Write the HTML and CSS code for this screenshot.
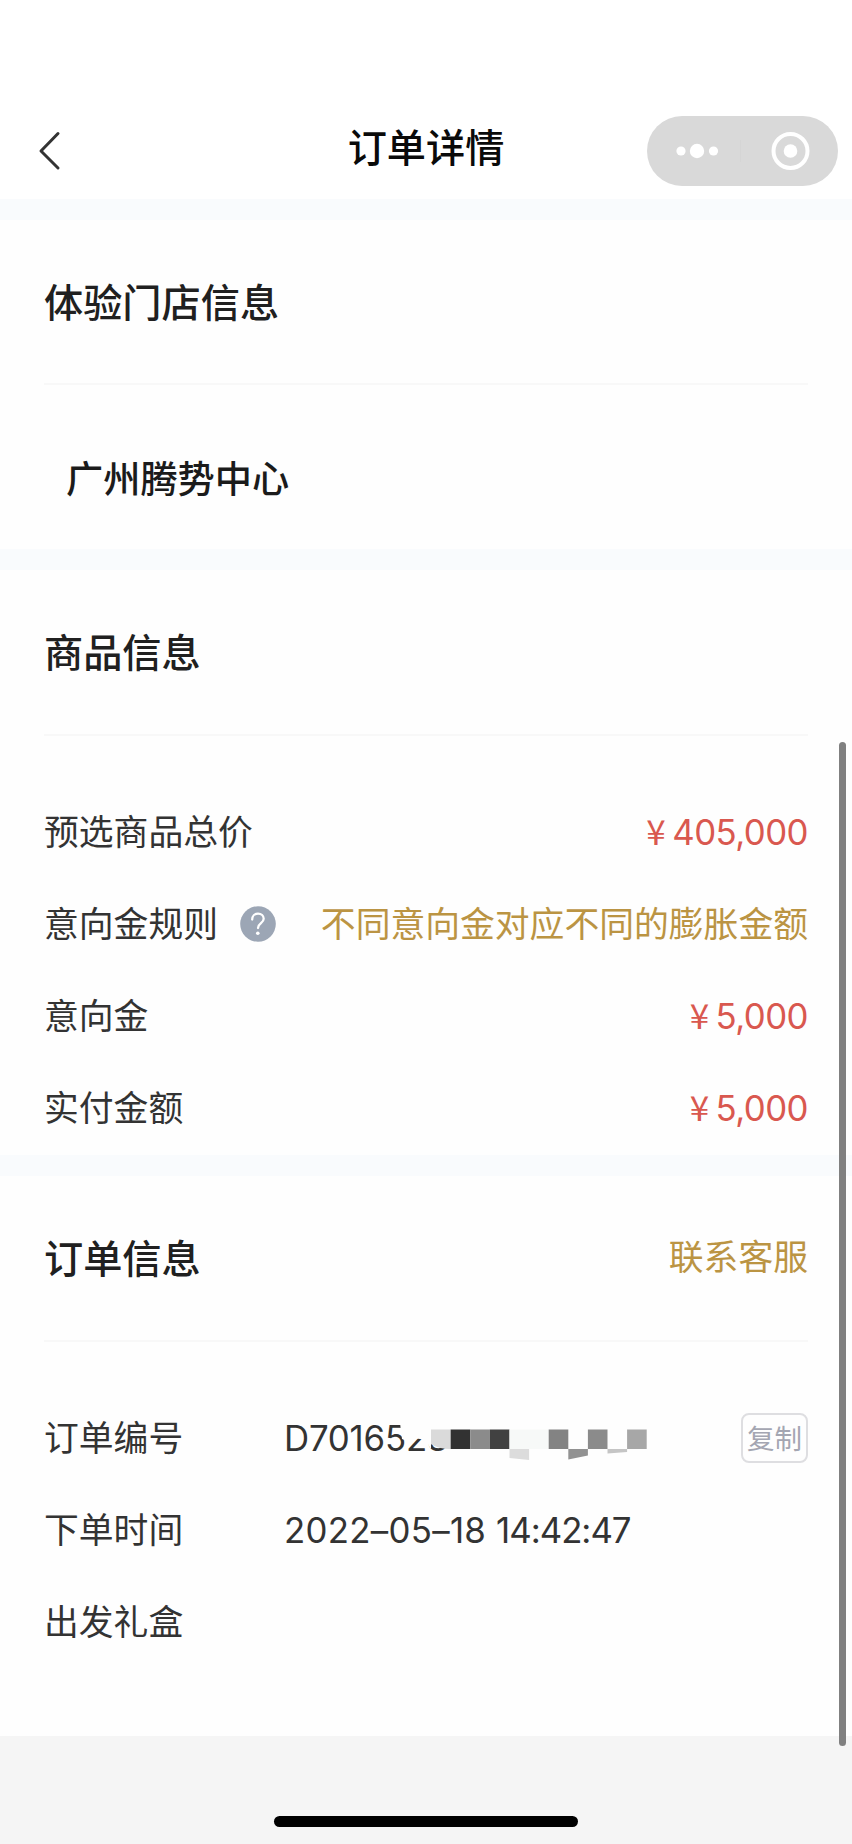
FILE: index.html
```html
<!DOCTYPE html>
<html lang="zh-CN">
<head>
<meta charset="utf-8">
<title>订单详情</title>
<link rel="stylesheet" href="styles.css">
</head>
<body>
<div class="page">
  <header class="nav">
    <svg class="back" viewBox="0 0 24 40" fill="none" stroke="#333" stroke-width="3" stroke-linecap="round" stroke-linejoin="round"><path d="M20 2.500 3 20 20 37"/></svg>
    <h1 class="nav-title">订单详情</h1>
    <svg class="capsule" viewBox="0 0 191 70">
      <rect width="191" height="70" rx="35" fill="#d9d9d9"/>
      <g fill="#fff"><circle cx="34" cy="35" r="4.6"/><circle cx="50" cy="35" r="7.2"/><circle cx="66.5" cy="35" r="4.6"/><circle cx="143.5" cy="35" r="6.8"/></g>
      <path d="M93.5 24v22" stroke="#d5d5d5"/>
      <circle cx="143.5" cy="35" r="17" fill="none" stroke="#fff" stroke-width="4"/>
    </svg>
  </header>

  <section class="card card-store">
    <div class="card-head"><h2>体验门店信息</h2></div>
    <p class="store">广州腾势中心</p>
  </section>

  <section class="card card-goods">
    <div class="card-head"><h2>商品信息</h2></div>
    <div class="rows">
      <div class="row"><span>预选商品总价</span><span class="price"><span class="yen">¥</span>405,000</span></div>
      <div class="row"><span>意向金规则</span>
        <svg class="help" viewBox="0 0 36 36"><circle cx="18" cy="18" r="17.8" fill="#9ca6b5"/><path d="M12.2 13.6c0-3.7 2.5-6 5.8-6s5.7 2.200 5.700 5.200c0 4.300-5.700 4.400-5.700 9.200" fill="none" stroke="#fff" stroke-width="2.300" stroke-linecap="round"/><circle cx="17.800" cy="27.300" r="1.800" fill="#fff"/></svg>
        <span class="gold end">不同意向金对应不同的膨胀金额</span></div>
      <div class="row"><span>意向金</span><span class="price"><span class="yen">¥</span>5,000</span></div>
      <div class="row"><span>实付金额</span><span class="price"><span class="yen">¥</span>5,000</span></div>
    </div>
  </section>

  <section class="card card-order">
    <div class="card-head"><h2>订单信息</h2><span class="gold end">联系客服</span></div>
    <div class="rows">
      <div class="row"><span class="label">订单编号</span>
        <span class="order-no">D7016523
          <svg class="mask" viewBox="0 0 264 50">
            <path d="M13 0H264V18H45V34Q41 30 42 24H34Q28 22 24 27L16 24Z" fill="#fefefe"/>
            <path d="M45 14.500h20v19.500q-13 0-20-5z" fill="#dadada"/>
            <g>
              <rect x="64.700" y="14.500" width="19.600" height="19.500" fill="#323232"/>
              <rect x="84.300" y="14.500" width="19.600" height="19.500" fill="#8b8b8b"/>
              <rect x="103.900" y="14.500" width="19.600" height="19.500" fill="#414141"/>
              <rect x="123.500" y="14.500" width="39.200" height="19.500" fill="#f7f9f8"/>
              <rect x="162.700" y="14.500" width="19.600" height="19.500" fill="#838383"/>
              <rect x="201.900" y="14.500" width="19.600" height="19.500" fill="#8b8b8b"/>
              <rect x="241.100" y="14.500" width="19.600" height="19.500" fill="#a7a7a7"/>
              <path d="M123.500 34h19.600v11l-19.600-2z" fill="#dcdcdc"/>
              <path d="M182.300 34h19.600v6.500l-19.600 4z" fill="#929292"/>
              <path d="M221.500 34h19.600v3l-19.600 1.500z" fill="#c5c5c5"/>
            </g>
          </svg>
        </span>
        <button class="copy end">复制</button></div>
      <div class="row"><span class="label">下单时间</span><span><span class="date">2022–05–18</span> <span class="time">14:42:47</span></span></div>
      <div class="row"><span class="label">出发礼盒</span></div>
    </div>
  </section>

  <footer class="foot"><div class="home"></div></footer>
  <div class="scrollbar"></div>
</div>
</body>
</html>
```

FILE: styles.css
```css
* { box-sizing: border-box; }
body { margin: 0; background: #f5f5f5; }
.page {
  position: relative;
  width: 852px;
  height: 1844px;
  overflow: hidden;
  display: flex;
  flex-direction: column;
  gap: 21px;
  background: #f9fbfd;
  color: #333;
  font-family: Inter, "Noto Sans CJK SC", sans-serif;
  font-size: 34.8px;
  line-height: 50px;
}
h1, h2, p { margin: 0; font-weight: 500; }
.nav {
  flex: none;
  height: 199px;
  padding: 103px 14px 0 38px;
  display: grid;
  grid-template-columns: 191px 1fr 191px;
  align-items: center;
  background: #fff;
}
.back { width: 24px; height: 40px; }
.nav-title { font-size: 39.200px; color: #0a0a0a; text-align: center; padding-right: 24px; margin-top: -6px; }
.capsule { width: 191px; height: 70px; }
.card { flex: none; padding: 0 44px; background: #fefefe; }
.card-store { height: 329px; }
.card-goods { height: 585px; }
.card-order { height: 560px; }
.card-head {
  height: 165px;
  display: flex;
  align-items: center;
  padding-top: 2px;
  border-bottom: 2px solid #f8f8f8;
}
.card-goods .card-head, .card-order .card-head { height: 166px; padding-top: 1px; }
.card-head .gold { margin-top: -3px; }
.card-head h2 { font-size: 39.200px; color: #202020; }
.store { font-size: 37.200px; color: #1b1b1b; padding: 70px 22px 0; }
.rows { padding-top: 50px; }
.row { height: 92px; display: flex; align-items: center; }
.end, .price { margin-left: auto; }
.price { color: #d9584f; display: flex; letter-spacing: -0.55px; }
.yen { font-family: "Noto Sans CJK SC", sans-serif; font-size: 35px; margin-right: 7px; margin-top: -2px; }
.gold { color: #bb9443; }
.help { width: 36px; height: 36px; margin-left: 22px; }
.label { width: 240px; }
.order-no { position: relative; letter-spacing: -0.2px; }
.mask { position: absolute; left: 102px; top: 2px; width: 264px; height: 50px; }
.date { letter-spacing: 0.3px; }
.time { letter-spacing: -1px; }
.copy {
  width: 67px;
  height: 50px;
  padding: 0 0 3px;
  border: 2px solid #dedee1;
  border-radius: 8px;
  background: transparent;
  color: #a4a6b2;
  font: 27.500px/40px "Noto Sans CJK SC", sans-serif;
}
.foot { flex: 1; margin-top: -21px; background: #f5f5f5; padding-top: 80px; }
.home { width: 304px; height: 11px; margin: 0 auto; border-radius: 6px; background: #000; }
.scrollbar {
  position: absolute;
  left: 839px;
  top: 742px;
  width: 7px;
  height: 1004px;
  border-radius: 4px;
  background: #808080;
}
```
